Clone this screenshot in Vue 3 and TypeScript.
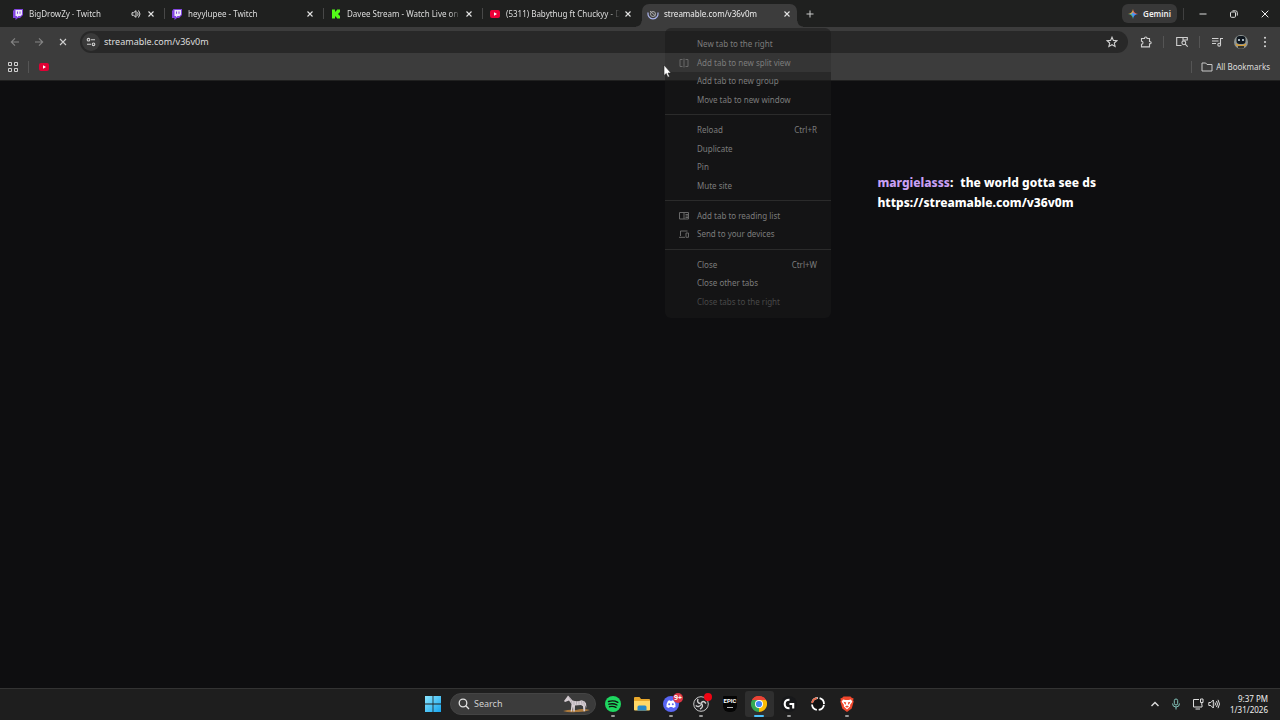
<script setup lang="ts">
import { ref } from 'vue'

interface Tab {
  title: string
  icon: 'twitch' | 'kick' | 'youtube' | 'loading'
  audio?: boolean
  active?: boolean
}

interface MenuItem {
  label: string
  keys?: string
  icon?: 'split' | 'reading' | 'devices'
  hovered?: boolean
  disabled?: boolean
}

const tabs: Tab[] = [
  { title: 'BigDrowZy - Twitch', icon: 'twitch', audio: true },
  { title: 'heyylupee - Twitch', icon: 'twitch' },
  { title: 'Davee Stream - Watch Live on K', icon: 'kick' },
  { title: '(5311) Babythug ft Chuckyy - D', icon: 'youtube' },
  { title: 'streamable.com/v36v0m', icon: 'loading', active: true },
]

const menu: MenuItem[][] = [
  [
    { label: 'New tab to the right' },
    { label: 'Add tab to new split view', icon: 'split', hovered: true },
    { label: 'Add tab to new group' },
    { label: 'Move tab to new window' },
  ],
  [
    { label: 'Reload', keys: 'Ctrl+R' },
    { label: 'Duplicate' },
    { label: 'Pin' },
    { label: 'Mute site' },
  ],
  [
    { label: 'Add tab to reading list', icon: 'reading' },
    { label: 'Send to your devices', icon: 'devices' },
  ],
  [
    { label: 'Close', keys: 'Ctrl+W' },
    { label: 'Close other tabs' },
    { label: 'Close tabs to the right', disabled: true },
  ],
]

const address = ref('streamable.com/v36v0m')
const query = ref('')
</script>

<template>
  <div class="screen">
    <header class="tabstrip">
      <nav class="tabs" aria-label="Tabs">
        <div v-for="tab in tabs" :key="tab.title" class="tab" :class="{ active: tab.active }">
          <svg v-if="tab.icon === 'twitch'" class="fav" viewBox="0 0 12 12">
            <path d="M2.500 1 1 3v7h2.500v2L6 10h2l3-3V1z" fill="#8245e0" />
            <path d="M3.500 2h6.500v4.500L8.500 8H6.500L5 9.300V8H3.500z" fill="#eee8fa" />
            <path d="M5.500 3.500v2.300M8 3.500v2.300" stroke="#8245e0" stroke-width="1" />
          </svg>
          <svg v-else-if="tab.icon === 'kick'" class="fav" viewBox="0 0 12 12">
            <path d="M2 1.500h3v2h1v-1h1v-1h3v3H9v1H8v1h1v1h1v3H7v-1H6v-1H5v2H2z" fill="#53fc18" />
          </svg>
          <svg v-else-if="tab.icon === 'youtube'" class="fav" viewBox="0 0 12 12">
            <rect x="1" y="2" width="10" height="8" rx="2" fill="#ee0038" />
            <path d="M5 4.300v3.400L8 6z" fill="#fff" />
          </svg>
          <svg v-else class="fav" viewBox="0 0 12 12" fill="none">
            <path d="M1.200 4.500A5 5 0 1 0 10.800 4.500" stroke="#a9b2e8" stroke-width="1.200" />
            <circle cx="6" cy="6" r="2.500" stroke="#aaa" stroke-width="1" />
            <path d="M3 3l5.500 5" stroke="#aaa" stroke-width="1" />
          </svg>
          <span class="title">{{ tab.title }}</span>
          <svg v-if="tab.audio" class="audio" viewBox="0 0 10 10" fill="none" stroke="#ddd">
            <path d="M1 3.700h1.600L5 1.700v6.600L2.600 6.300H1z" />
            <path d="M6.500 3.300q1.300 1.700 0 3.400M7.500 1.500q3 3.500 0 7" />
          </svg>
          <button class="close" aria-label="Close tab">
            <svg viewBox="0 0 8 8"><path d="M1.500 1.500l5 5M6.500 1.500l-5 5" stroke="#e4e4e4" stroke-width="1.100" /></svg>
          </button>
        </div>
      </nav>
      <button class="newtab" aria-label="New tab">
        <svg viewBox="0 0 8 8"><path d="M4 .5v7M.5 4h7" stroke="#ccc" /></svg>
      </button>
      <button class="gemini">
        <svg viewBox="0 0 10 10">
          <path d="M5 5V0Q5.600 4.400 10 5z" fill="#ee6a55" />
          <path d="M5 5h5Q5.600 5.600 5 10z" fill="#3f8cf7" />
          <path d="M5 5v5Q4.400 5.600 0 5z" fill="#4cb883" />
          <path d="M5 5H0Q4.400 4.400 5 0z" fill="#e0b248" />
          <path d="M5 3Q5.400 4.600 7.500 5 5.400 5.400 5 8 4.600 5.400 3 5 4.600 4.600 5 3z" fill="#4a95f8" />
        </svg>
        Gemini
      </button>
      <span class="rule"></span>
      <div class="window-buttons">
        <button aria-label="Minimize"><svg viewBox="0 0 8 8"><path d="M.5 4h7" stroke="#ddd" /></svg></button>
        <button aria-label="Restore">
          <svg viewBox="0 0 8 8" fill="none" stroke="#ddd"><rect x=".5" y="2" width="5" height="5.300" rx="1" /><path d="M2.500.800h3q1.800 0 1.800 1.800v3" /></svg>
        </button>
        <button aria-label="Close window"><svg viewBox="0 0 8 8"><path d="M.7.700l6.600 6.600M7.300.700.7 7.300" stroke="#eee" /></svg></button>
      </div>
    </header>

    <div class="toolbar">
      <button class="nav dim" aria-label="Back"><svg viewBox="0 0 10 10"><path d="M9 5H1.500M5 1.300 1.300 5 5 8.700" /></svg></button>
      <button class="nav dim" aria-label="Forward"><svg viewBox="0 0 10 10"><path d="M1 5h7.500M5 1.300 8.700 5 5 8.700" /></svg></button>
      <button class="nav" aria-label="Stop"><svg viewBox="0 0 10 10"><path d="M2 2l6 6M8 2 2 8" /></svg></button>
      <div class="omnibox">
        <button class="site" aria-label="Site information">
          <svg viewBox="0 0 10 10"><circle cx="2.500" cy="2.700" r="1.300" /><path d="M5 2.700h4M1 7.300h4" /><circle cx="7.500" cy="7.300" r="1.300" /></svg>
        </button>
        <input v-model="address" aria-label="Address" spellcheck="false" />
        <button class="star" aria-label="Bookmark">
          <svg viewBox="0 0 12 12"><path d="M6 1.200l1.400 3.200 3.500.3-2.600 2.300.8 3.500L6 8.700l-3.100 1.800.8-3.500L1.100 4.700l3.500-.3z" /></svg>
        </button>
      </div>
      <div class="extensions">
        <button class="wide" aria-label="Extensions">
          <svg viewBox="0 0 12 12"><path d="M1.500 2.500h3q0-1.500 1.300-1.500t1.300 1.500h2.400v3q1.700 0 1.700 1.200t-1.700 1.200v3h-8v-2.700q1.500-.2 1.500-1.500T1.500 5.300z" /></svg>
        </button>
        <span class="rule"></span>
        <button class="wide" aria-label="Side search">
          <svg viewBox="0 0 12 12"><path d="M5.500 9.500H.700v-8h10.600v3M7 1.500v2.500h4" /><circle cx="7.800" cy="6.800" r="1.900" /><path d="M9.200 8.200l2.500 2.500" /></svg>
        </button>
        <span class="rule"></span>
        <button class="media" aria-label="Media controls">
          <svg viewBox="0 0 12 12"><path d="M1 2.500h6.500M1 5h6.500M1 7.500h4M9.500 8.500v-6H12" /><circle cx="8.200" cy="8.700" r="1.400" /></svg>
        </button>
        <button aria-label="Profile">
          <svg class="avatar" viewBox="0 0 14 14">
            <circle cx="7" cy="7" r="7" fill="#8f9694" />
            <rect x="2.500" y="1" width="9" height="8" rx="3" fill="#101820" />
            <path d="M5 4v2M9 4v2" stroke="#e7f7ff" stroke-width="1.400" />
            <path d="M2 8.500q5 3 10 0v1.700q-5 2.800-10 0z" fill="#d79c32" />
            <path d="M4 11h6v2q-3 1.500-6 0z" fill="#35352f" />
          </svg>
        </button>
        <button aria-label="Menu">
          <svg class="dots" viewBox="0 0 12 12"><circle cx="6" cy="1.800" r="1" /><circle cx="6" cy="6" r="1" /><circle cx="6" cy="10.200" r="1" /></svg>
        </button>
      </div>
    </div>

    <div class="bookmarks">
      <button class="grid" aria-label="Apps">
        <svg viewBox="0 0 10 10" fill="none" stroke="#d0d0d0"><path d="M.5.500h3v3h-3zM6.500.500h3v3h-3zM.5 6.500h3v3h-3zM6.500 6.500h3v3h-3z" /></svg>
      </button>
      <span class="rule"></span>
      <a href="#" class="yt" aria-label="YouTube">
        <svg viewBox="0 0 12 12"><rect x="1" y="2" width="10" height="8" rx="2" fill="#e00034" /><path d="M5 4.300v3.400L8 6z" fill="#fff" /></svg>
      </a>
      <span class="rule last"></span>
      <button class="all">
        <svg viewBox="0 0 12 10" fill="none" stroke="#c8c8c8"><path d="M1 1h3.700l1.300 1.500h5v6.500H1z" /></svg>
        All Bookmarks
      </button>
    </div>

    <main class="page">
      <div class="chat">
        <p><b>margielasss</b>:<span class="message">the world gotta see ds</span></p>
        <p>https://streamable.com/v36v0m</p>
      </div>
    </main>

    <footer class="taskbar">
      <div class="center">
        <button class="start" aria-label="Start">
          <svg viewBox="0 0 16 16">
            <defs><linearGradient id="win" x1="0" y1="0" x2="1" y2="1"><stop offset="0" stop-color="#8be6ff" /><stop offset="1" stop-color="#16a5ee" /></linearGradient></defs>
            <path d="M0 0h7.600v7.600H0zM8.400 0H16v7.600H8.400zM0 8.400h7.600V16H0zM8.400 8.400H16V16H8.400z" fill="url(#win)" />
          </svg>
        </button>
        <label class="search">
          <svg class="lens" viewBox="0 0 12 12" fill="none" stroke="#e0e0e0" stroke-width="1.300"><circle cx="5" cy="5" r="3.800" /><path d="M7.800 7.800 11 11" /></svg>
          <input v-model="query" placeholder="Search" aria-label="Search" />
          <svg class="zebra" viewBox="0 0 28 18">
            <path d="M0 16q7-2 13-1 7-2 14 0-6 2.500-14 2-7 1-13-1z" fill="#ad7a3c" />
            <path d="M1 6l3-4 1-1.500L6.500 2l3 3.500q5 1.500 9-.3 3.500.3 4.500 3l.5 5-1-3-.5 6h-1.500l-.5-5-2-1.200-6 .5-.2 6h-1.500l-.3-5-1 5H7.700L8.500 9 6 5.500 2 7z" fill="#d6cdd3" />
            <path d="M6 2l2 3M8 5.500l1 3M11 6v4M13.500 6v3.500M16 6v3.500M18.500 5.500l.5 4M20.500 6.500l1 4" stroke="#8f8893" stroke-width=".5" />
          </svg>
        </label>
        <div class="apps">
          <button aria-label="Spotify" class="open">
            <svg viewBox="0 0 16 16"><circle cx="8" cy="8" r="8" fill="#1ed760" /><path d="M3.500 5.500q5-1.500 9.300.8M4 8.200q4.300-1.200 8 .8M4.500 10.700q3.500-1 6.500.7" fill="none" stroke="#111" stroke-width="1.400" stroke-linecap="round" /></svg>
          </button>
          <button aria-label="File Explorer">
            <svg viewBox="0 0 16 16"><path d="M0 2q0-1 1-1h4.500L7 3h8q1 0 1 1v9.500H0z" fill="#e9a82b" /><path d="M0 5h16v8.500q0 1-1 1H1q-1 0-1-1z" fill="#ffd766" /><path d="M3.500 14.500V11q0-1.500 1.500-1.500h6q1.500 0 1.500 1.500v3.500z" fill="#2788c8" /></svg>
          </button>
          <button aria-label="Discord" class="open">
            <svg viewBox="0 0 16 16"><circle cx="8" cy="8" r="8" fill="#5865f2" /><path d="M3.500 11q-.3-3.500 1.500-6.300l2-.5.500.8h1l.5-.8 2 .5Q12.800 7.500 12.500 11L10 12l-.7-1H6.700L6 12z" fill="#fff" /><circle cx="6.200" cy="8.300" r="1" fill="#5865f2" /><circle cx="9.800" cy="8.300" r="1" fill="#5865f2" /></svg>
            <span class="badge">9+</span>
          </button>
          <button aria-label="OBS Studio" class="open">
            <svg viewBox="0 0 16 16" fill="none"><circle cx="8" cy="8" r="7.300" fill="#242426" stroke="#c8c8c8" stroke-width="1" /><path d="M7.500 7.500Q3.500 7 5 3M8.500 7.500Q11 11 7 13M8 8.500Q6 12 2.700 9.500M8 7.500q2-4 5 0" stroke="#cfcfcf" stroke-width="1.400" /></svg>
            <span class="badge dot"></span>
          </button>
          <button aria-label="Epic Games">
            <span class="epic">EPIC</span>
          </button>
          <button aria-label="Chrome" class="open current">
            <svg viewBox="0 0 16 16"><path d="M8 8 1.070 4A8 8 0 0 1 14.930 4z" fill="#ea4335" /><path d="M8 8 14.930 4A8 8 0 0 1 8 16z" fill="#fbbc05" /><path d="M8 8v8A8 8 0 0 1 1.070 4z" fill="#34a853" /><path d="M8 4h6.930q1 1.800 1.070 4L11.500 10z" fill="#fbbc05" /><path d="M1.070 4 4.500 10 8 4z" fill="#34a853" /><path d="M1.070 4 8 4h6.930A8 8 0 0 0 1.070 4z" fill="#ea4335" /><circle cx="8" cy="8" r="4" fill="#fff" /><circle cx="8" cy="8" r="3.100" fill="#4285f4" /></svg>
          </button>
          <button aria-label="Logitech G HUB" class="open">
            <svg viewBox="0 0 16 16" fill="none"><circle cx="8" cy="8" r="8" fill="#17181a" /><path d="M8.500 3.800Q3.700 3.700 3.700 8t4.800 4.200M8.500 8h3.700v4.500" stroke="#fff" stroke-width="2.100" /></svg>
          </button>
          <button aria-label="Capture">
            <svg viewBox="0 0 16 16" fill="none"><circle cx="8" cy="8" r="6" fill="#121212" stroke="#fff" stroke-width="1.800" stroke-dasharray="7.420 2" stroke-dashoffset="-1" /><path d="M2.100 7A6 6 0 0 1 7 2.100" stroke="#e7694a" stroke-width="1.800" /></svg>
          </button>
          <button aria-label="Brave" class="open">
            <svg viewBox="0 0 16 16"><path d="M4.500.500h7L13 2l1.500.300-.3 2.200.5 1-2 7L8 16l-4.700-3.500-2-7 .5-1L1.500 2.300 3 2z" fill="#f0472c" /><path d="M4 3.500l2.500.500h3l2.500-.5 1.300 2.300L11 9l.3 1.300L8 13.500l-3.300-3.200L5 9 2.700 5.800z" fill="#fff" /><path d="M4.500 5.800l2.700.8-.8 2.400zM11.500 5.800l-2.700.8.8 2.400zM6 10.500l2-1 2 1-2 1.300z" fill="#f0472c" /></svg>
          </button>
        </div>
      </div>
      <div class="tray">
        <button aria-label="Hidden icons"><svg viewBox="0 0 12 12"><path d="M2.500 8 6 4.500 9.500 8" stroke-width="1.400" /></svg></button>
        <button aria-label="Microphone"><svg class="mic" viewBox="0 0 12 12"><rect x="4.300" y="1" width="3.400" height="6" rx="1.700" /><path d="M2.500 5.500q0 3.500 3.500 3.500t3.500-3.500M6 9v2.500" /></svg></button>
        <button aria-label="Network and sound" class="pair">
          <svg viewBox="0 0 12 12"><path d="M7 1.500H1.500v7.500H10V7M3.500 11h4.500M8.500 1h2.500v3.500H8.500zM9.800 4.500V7" /></svg>
          <svg viewBox="0 0 12 12"><path d="M.8 4.500h2L5.300 2v8L2.800 7.500h-2zM7 4.500q1 1.500 0 3M8.500 3q2 3 0 6M10 1.800q3 4.200 0 8.400" /></svg>
        </button>
        <time><span>9:37 PM</span><span>1/31/2026</span></time>
      </div>
    </footer>

    <div class="menu" role="menu">
      <template v-for="(group, index) in menu" :key="index">
        <hr v-if="index > 0" />
        <button v-for="item in group" :key="item.label" role="menuitem" :class="{ hovered: item.hovered }" :disabled="item.disabled">
          <span class="glyph">
            <svg v-if="item.icon" viewBox="0 0 10 10">
              <path v-if="item.icon === 'split'" d="M3.500 1.500h-2.500v7h2.500M5 .5v9M6.500 1.500h2.500v7h-2.500" />
              <path v-else-if="item.icon === 'reading'" d="M.5 1.500h9v6.500h-9zM5 1.500v6.500M6.500 3.500H9M6.500 5H9M6.500 6.500H9" />
              <path v-else d="M1.500 7V2h7M0 8.300h6M7 4h2.500v4.300H7z" />
            </svg>
          </span>
          <span class="label">{{ item.label }}</span>
          <kbd v-if="item.keys">{{ item.keys }}</kbd>
        </button>
      </template>
    </div>

    <svg class="pointer" viewBox="0 0 9 14"><path d="M1 1v10.500l2.300-2 1.500 3.700 1.700-.8L5 9h3z" fill="#fff" stroke="#222" stroke-width=".6" /></svg>
  </div>
</template>

<style>
body {
  margin: 0;
  background: #0e0e10;
}
</style>

<style scoped>
.screen {
  position: relative;
  display: flex;
  flex-direction: column;
  min-height: 100vh;
  overflow: hidden;
  background: #0e0e10;
  color: #dedede;
  font: 8px/12px "Noto Sans", "Open Sans", sans-serif;
}
button, input {
  margin: 0;
  padding: 0;
  border: 0;
  background: none;
  color: inherit;
  font: inherit;
}
button {
  display: flex;
  align-items: center;
  justify-content: center;
}
svg {
  display: block;
  flex: none;
}
.rule {
  width: 1px;
  height: 12px;
  background: #555;
}
.tabstrip {
  display: flex;
  align-items: center;
  height: 27px;
  padding-left: 6px;
  background: #1f201f;
}
.tabs {
  display: flex;
  align-self: stretch;
}
.tab {
  position: relative;
  display: flex;
  align-items: center;
  box-sizing: border-box;
  width: 159px;
  padding: 0 10px 0 6px;
}
.tab:not(.active)::after {
  content: "";
  position: absolute;
  right: 0;
  top: 8px;
  width: 1px;
  height: 11px;
  background: #484848;
}
.tab:nth-child(4)::after {
  display: none;
}
.fav {
  width: 12px;
  height: 12px;
  margin-right: 5px;
}
.title {
  flex: 1;
  min-width: 0;
  overflow: hidden;
  white-space: nowrap;
  mask-image: linear-gradient(to right, #000 calc(100% - 12px), transparent);
}
.audio {
  width: 10px;
  height: 10px;
  margin-right: 2px;
}
.close {
  width: 8px;
  height: 12px;
  margin-left: 4px;
}
.close svg, .newtab svg, .window-buttons svg {
  width: 8px;
  height: 8px;
}
.tab.active {
  width: 155px;
  margin-top: 4px;
  padding: 0 6px 4px 5px;
  border-radius: 7px 7px 0 0;
  background: #3c3c3c;
  color: #eee;
}
.tab.active::before, .tab.active::after {
  content: "";
  position: absolute;
  top: auto;
  bottom: 0;
  width: 6px;
  height: 6px;
}
.tab.active::before {
  left: -6px;
  background: radial-gradient(circle at 0 0, transparent 5px, #3c3c3c 6px);
}
.tab.active::after {
  right: -6px;
  background: radial-gradient(circle at 100% 0, transparent 5px, #3c3c3c 6px);
}
.newtab {
  width: 26px;
  height: 20px;
}
.gemini {
  gap: 5px;
  width: 55px;
  height: 19px;
  margin-left: auto;
  border-radius: 6px;
  background: #383838;
  color: #eee;
  font-weight: 600;
}
.gemini svg {
  width: 10px;
  height: 10px;
}
.gemini + .rule {
  margin-left: 6px;
  background: #404040;
}
.window-buttons {
  display: flex;
  margin-left: 3px;
}
.window-buttons button {
  width: 31px;
  height: 24px;
}
.toolbar {
  display: flex;
  align-items: center;
  height: 29px;
  padding-left: 3px;
  background: #3c3c3c;
}
.toolbar svg {
  fill: none;
  stroke: #d0d0d0;
  stroke-width: 1.1;
}
.nav {
  width: 24px;
  height: 24px;
}
.nav svg, .site svg {
  width: 10px;
  height: 10px;
}
.toolbar .dim svg {
  stroke: #858585;
}
.omnibox {
  display: flex;
  flex: 1;
  align-items: center;
  height: 22px;
  margin-left: 5px;
  padding-left: 2px;
  border-radius: 11px;
  background: #282828;
}
.site {
  width: 18px;
  height: 18px;
  margin-right: 4px;
  border-radius: 9px;
  background: #3a3a3a;
}
.omnibox input {
  flex: 1;
  min-width: 0;
  height: 16px;
  outline: 0;
  font-size: 9px;
}
.star {
  width: 32px;
  height: 20px;
}
.star svg, .extensions svg {
  width: 12px;
  height: 12px;
}
.extensions {
  display: flex;
  align-items: center;
  width: 152px;
}
.extensions button {
  width: 24px;
  height: 24px;
}
.extensions .wide {
  width: 35px;
}
.extensions .media {
  margin-left: 5px;
}
.extensions .avatar {
  width: 14px;
  height: 14px;
  stroke: none;
}
.extensions .dots {
  fill: #ddd;
  stroke: none;
}
.bookmarks {
  display: flex;
  align-items: center;
  height: 21px;
  padding: 0 10px 3px 8px;
  border-bottom: 1px solid #202020;
  background: #3c3c3c;
}
.bookmarks svg {
  width: 10px;
  height: 10px;
}
.grid {
  width: 10px;
  height: 18px;
}
.grid + .rule {
  margin-left: 10px;
}
.bookmarks .yt {
  margin-left: 9px;
}
.bookmarks .yt svg {
  width: 12px;
  height: 12px;
}
.bookmarks .last {
  margin-left: auto;
}
.all {
  gap: 3px;
  margin-left: 9px;
}
.bookmarks .all svg {
  width: 12px;
}
.page {
  display: flex;
  flex: 1;
  justify-content: flex-end;
  align-items: flex-start;
}
.chat {
  margin: 92px 184px 0 0;
  color: #fff;
  font: 800 12px/20px "Noto Sans", "Open Sans", sans-serif;
}
.chat p {
  margin: 0;
}
.chat b {
  color: #c9a0f5;
  font-weight: inherit;
}
.message {
  margin-left: 7px;
}
.taskbar {
  display: grid;
  grid-template-columns: 1fr auto 1fr;
  height: 29px;
  padding-bottom: 2px;
  border-top: 1px solid #333;
  background: #1e1e1e;
}
.center {
  display: flex;
  grid-column: 2;
  align-items: center;
  gap: 2px;
}
.start {
  width: 30px;
  height: 28px;
}
.start svg, .apps svg {
  width: 16px;
  height: 16px;
}
.search {
  display: flex;
  align-items: center;
  box-sizing: border-box;
  width: 146px;
  height: 22px;
  padding: 0 4px 0 7px;
  border: 1px solid #444;
  border-radius: 11px;
  background: #3b3b3b;
}
.lens {
  width: 12px;
  height: 12px;
}
.search input {
  flex: 1;
  min-width: 0;
  margin-left: 4px;
  outline: 0;
  font-size: 9px;
}
.search input::placeholder {
  color: #d0d0d0;
  opacity: 1;
}
.zebra {
  width: 28px;
  height: 18px;
}
.apps {
  display: flex;
  width: 264px;
  height: 26px;
}
.apps button {
  position: relative;
  flex: 1;
  border-radius: 3px;
}
.apps .open::after {
  content: "";
  position: absolute;
  left: 50%;
  bottom: 0;
  width: 4px;
  height: 2px;
  margin-left: -2px;
  border-radius: 1px;
  background: #999;
}
.apps .current {
  background: #2f2f2f;
}
.apps .current::after {
  width: 10px;
  margin-left: -5px;
  background: #4cc2ff;
}
.badge {
  position: absolute;
  top: 2px;
  right: 3px;
  width: 10px;
  height: 10px;
  border-radius: 5px;
  background: #dc3545;
  color: #fff;
  font: 700 7px/10px "Noto Sans", sans-serif;
  text-align: center;
}
.dot {
  width: 8px;
  height: 8px;
  background: #f00514;
}
.epic {
  width: 14px;
  height: 16px;
  border-radius: 1px 1px 6px 6px;
  background: #050505;
  color: #fff;
  font: 700 6px/10px "Roboto", sans-serif;
  text-align: center;
}
.epic::after {
  content: "";
  display: block;
  width: 6px;
  height: 1px;
  margin: 1px auto 0;
  background: #bbb;
}
.tray {
  display: flex;
  justify-content: flex-end;
  align-items: center;
  padding-right: 12px;
}
.tray svg {
  width: 12px;
  height: 12px;
  fill: none;
  stroke: #ddd;
}
.tray button {
  width: 21px;
  height: 28px;
}
.tray .mic {
  stroke: #83c4bb;
}
.tray .pair {
  gap: 4px;
  width: 36px;
  margin-left: 2px;
}
time {
  width: 44px;
  color: #eee;
  line-height: 11px;
  text-align: right;
}
time span {
  display: block;
  white-space: nowrap;
}
.menu {
  position: absolute;
  left: 665px;
  top: 28px;
  display: flex;
  flex-direction: column;
  box-sizing: border-box;
  width: 166px;
  height: 290px;
  padding: 7px 0;
  border-radius: 6px;
  background: rgba(25, 25, 25, 0.55);
  color: #7c7c7c;
}
.menu button {
  flex: 1;
  justify-content: flex-start;
  padding: 0 14px;
}
.menu .hovered {
  background: #353535;
}
.menu button:disabled {
  color: #484848;
}
.menu hr {
  width: 100%;
  height: 1px;
  margin: 5px 0 6px;
  border: 0;
  background: #2b2b2b;
}
.glyph {
  width: 18px;
}
.glyph svg {
  width: 10px;
  height: 10px;
  fill: none;
  stroke: #686868;
}
.label {
  white-space: nowrap;
}
kbd {
  margin-left: auto;
  font: inherit;
}
.pointer {
  position: absolute;
  left: 663px;
  top: 64px;
  width: 9px;
  height: 14px;
}
</style>
